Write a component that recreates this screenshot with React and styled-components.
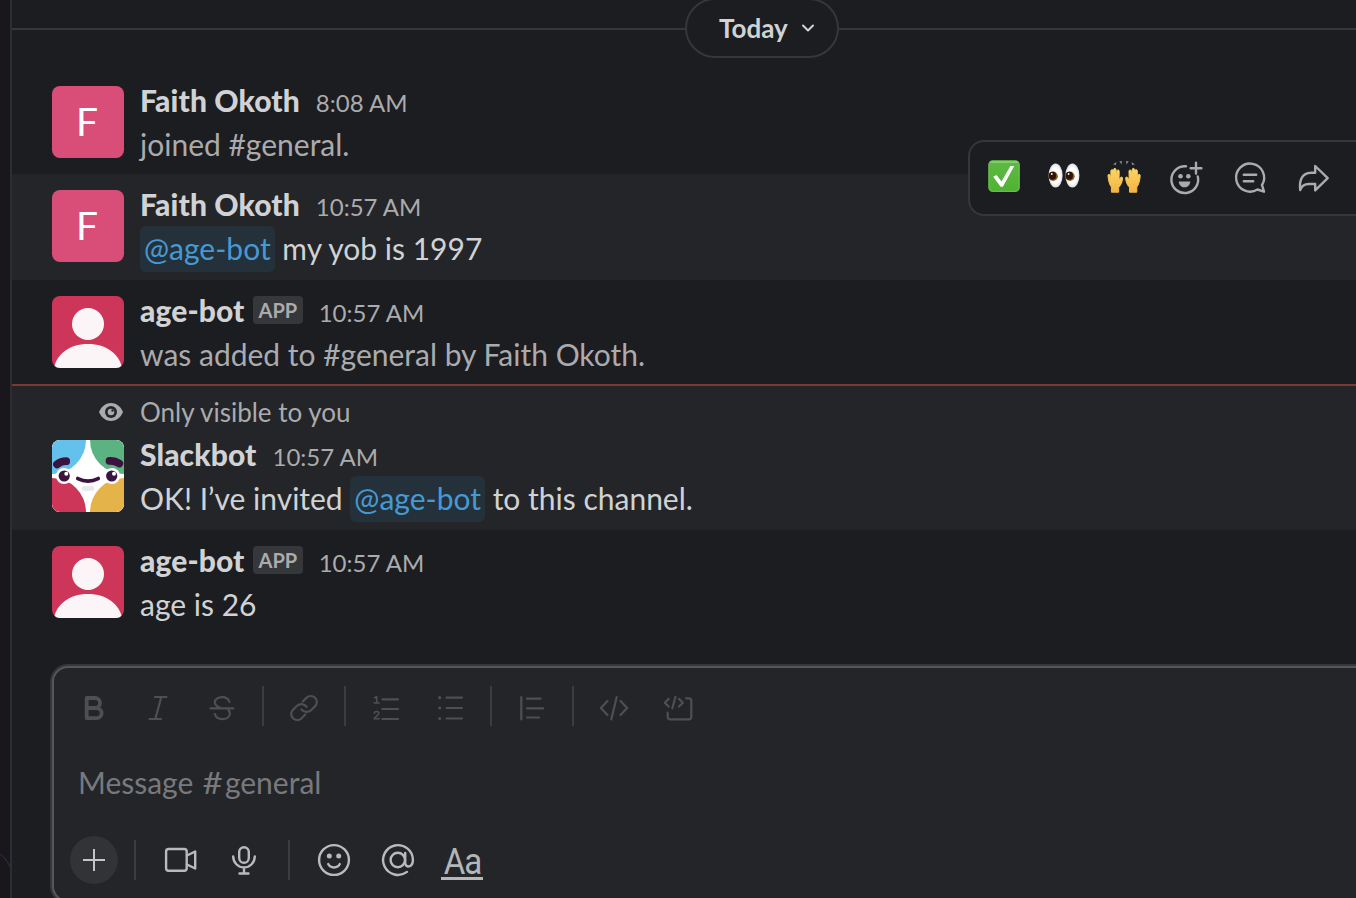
import React from 'react';
import styled, { createGlobalStyle } from 'styled-components';

const GlobalStyle = createGlobalStyle`
  *, *::before, *::after { box-sizing: border-box; }
  html, body { margin: 0; padding: 0; background: #1b1d21; overflow: hidden; }
  body { font-family: Lato, "Liberation Sans", sans-serif; color: #d1d2d3; }
`;

const Shell = styled.div`
  display: flex;
  width: 100vw;
  height: 898px;
  overflow: hidden;
`;

const Rail = styled.aside`
  position: relative;
  flex: 0 0 12px;
  background: #19171c;
  border-right: 2px solid #2d2e33;
  overflow: hidden;
  &::after {
    content: '';
    position: absolute;
    right: -3px;
    top: 847px;
    width: 72px;
    height: 72px;
    border: 1px solid #35343a;
    border-radius: 32px;
  }
`;

const Channel = styled.main`
  position: relative;
  flex: 1;
  min-width: 0;
  display: flex;
  flex-direction: column;
  background: #1b1d21;
`;

const DateDivider = styled.div`
  display: flex;
  align-items: center;
  height: 60px;
  margin-top: -1px;
  flex: none;
  width: 1500px;
  &::before, &::after {
    content: '';
    height: 2px;
    background: #35373b;
  }
  &::before { width: 673px; }
  &::after { flex: 1; }
`;

const DatePill = styled.button`
  display: flex;
  align-items: center;
  gap: 11px;
  width: 154px;
  height: 60px;
  margin: 0 0 2px;
  padding: 0 0 0 32px;
  border: 2px solid #35373b;
  border-radius: 30px;
  background: #1b1d21;
  color: #d1d2d3;
  font: 700 26px/36px Lato, sans-serif;
`;

const MessageList = styled.section`
  display: flex;
  flex-direction: column;
  padding-top: 11px;
`;

const Message = styled.article`
  display: flex;
  flex-direction: column;
  height: ${p => p.$height}px;
  padding: 8px 40px 0;
  background: ${p => (p.$lit ? '#232529' : 'transparent')};
`;

const UnreadLine = styled.div`
  height: 2px;
  background: #7b3a2e;
`;

const Notice = styled.div`
  display: flex;
  align-items: center;
  gap: 16px;
  height: 36px;
  margin: 0 0 2px 46px;
  color: #ababad;
  font-size: 26px;
  line-height: 36px;
`;

const MessageRow = styled.div`
  display: flex;
  gap: 16px;
`;

const Avatar = styled.div`
  flex: none;
  width: 72px;
  height: 72px;
  margin-top: 8px;
  border-radius: 8px;
  overflow: hidden;
  background: ${p => p.$color};
`;

const Initial = styled.span`
  display: block;
  width: 70px;
  color: #fff;
  font-size: 39px;
  line-height: 70px;
  text-align: center;
`;

const Body = styled.div`
  display: flex;
  flex-direction: column;
`;

const Header = styled.div`
  display: flex;
  align-items: baseline;
  height: 44px;
  line-height: 44px;
`;

const Name = styled.span`
  font-size: 30px;
  font-weight: 900;
  letter-spacing: 0.1px;
`;

const AppTag = styled.span`
  align-self: flex-start;
  height: 28px;
  margin: 8px 0 0 8px;
  padding: 0 6px;
  border-radius: 4px;
  background: #35373b;
  color: #ababad;
  font-size: 20px;
  font-weight: 700;
  line-height: 29px;
`;

const Time = styled.time`
  margin-left: ${p => (p.$afterTag ? 15.500 : 16)}px;
  color: #ababad;
  font-size: 24px;
`;

const Text = styled.p`
  margin: 0;
  height: 44px;
  color: ${p => (p.$muted ? '#ababad' : '#d1d2d3')};
  font-size: 30px;
  line-height: 44px;
  white-space: pre;
`;

const Mention = styled.span`
  padding: 4px 4px 6px;
  border-radius: 6px;
  background: #24313a;
  color: #4799d3;
`;

const Actions = styled.div`
  position: absolute;
  left: 956px;
  top: 140px;
  display: flex;
  align-items: center;
  width: 440px;
  height: 76px;
  padding: 0 4px;
  border: 2px solid #35373b;
  border-radius: 16px;
  background: #1b1d21;
`;

const IconCell = styled.span`
  flex: none;
  display: flex;
  align-items: center;
  justify-content: center;
  width: ${p => p.$width || 64}px;
  height: 40px;
  color: ${p => p.$color || '#ababad'};
`;

const FormatCell = styled(IconCell)`
  height: 44px;
  margin-top: 4px;
`;

const Composer = styled.section`
  flex: none;
  display: flex;
  flex-direction: column;
  width: 1400px;
  height: 236px;
  margin: 30px 0 0 40px;
  padding: 18px 8px 0;
  border: 2px solid #565856;
  border-radius: 16px;
  box-shadow: 0 0 0 2px #35373a;
  background: #232529;
`;

const ToolRow = styled.div`
  display: flex;
  align-items: center;
  height: 48px;
`;

const FormatRow = styled(ToolRow)`
  height: 40px;
`;

const Separator = styled.span`
  width: 2px;
  height: 40px;
  margin: 0 ${p => p.$after ?? 8}px 0 ${p => p.$before ?? 8}px;
  background: #3b3d41;
`;

const Placeholder = styled.div`
  height: 44px;
  margin: 34px 0 32px 16px;
  color: #78797c;
  font-size: 30px;
  line-height: 44px;
`;

const Hash = styled.span`
  display: inline-block;
  margin: 0 3.500px 0 3px;
  transform: scaleX(1.16);
`;

const AddButton = styled.button`
  display: flex;
  align-items: center;
  justify-content: center;
  width: 48px;
  height: 48px;
  margin-left: 8px;
  margin-right: 16px;
  padding: 0;
  border: 0;
  border-radius: 50%;
  background: #313337;
  color: #c4c5c6;
`;

const FontToggle = styled.span`
  display: flex;
  justify-content: center;
  width: 42px;
  height: 37px;
  margin-top: 2px;
  border-bottom: 3px solid #b6b7b9;
  color: #b4b5b6;
  font: 400 36px/38px Roboto, sans-serif;
  letter-spacing: -1px;
`;

const Squeeze = styled.span`
  display: inline-block;
  transform: translateX(1px) scaleX(0.92);
`;

const Icon = ({ children, w = 2.2, size = 40 }) => (
  <svg width={size} height={size} viewBox={`0 0 ${size} ${size}`} fill="none" stroke="currentColor"
    strokeWidth={w} strokeLinecap="round" strokeLinejoin="round" aria-hidden="true">
    {children}
  </svg>
);

const FORMAT = '#4d4f53';

const formatIcons = {
  bold: <Icon w={3.8}><path d="M12.700 10h8.300a5 5 0 0 1 0 10H12.700zM12.700 20h9.800a5 5 0 0 1 0 10.200H12.700z" /></Icon>,
  italic: <Icon><path d="M17 9h11.5M11.5 31H23M23.3 9l-6 22" /></Icon>,
  strike: <Icon><path d="M8.5 20.3h23M27.5 14C26.5 10.8 23.6 9.2 20 9.2c-4 0-7.2 2.1-7.2 5.1 0 2.6 2 4.1 4.7 5M12.8 26c1 3.4 3.8 5.1 7.6 5.1 4.4 0 7.4-2.2 7.4-5.4 0-1.400-.5-2.600-1.300-3.600" /></Icon>,
  link: (
    <Icon w={1.7}>
      <g transform="translate(4.300 4.300) scale(1.310)">
        <path d="M10 13a5 5 0 0 0 7.540.540l3-3a4.600 4.600 0 0 0-6.500-6.500l-3 3" />
        <path d="M14 11a5 5 0 0 0-7.540-.540l-3 3a4.600 4.600 0 0 0 6.500 6.500l3-3" />
      </g>
    </Icon>
  ),
  ordered: <Icon><path d="M16.500 11.300h15.500M16.500 21h15.500M16.500 31h15.500" /><path strokeWidth="1.600" d="M8.500 9.800l2.200-1.100v6.200M8 15h5.200M8.200 25.300c.4-2.500 4.600-2.300 4.600 0 0 1.800-2.800 3-4.600 5.500h5" /></Icon>,
  bullets: <Icon><path d="M16.500 9.700h15.500M16.500 20h15.500M16.500 30.500h15.500" /><g fill="currentColor" stroke="none"><circle cx="9.700" cy="9.700" r="1.600" /><circle cx="9.700" cy="20" r="1.600" /><circle cx="9.700" cy="30.500" r="1.600" /></g></Icon>,
  quote: <Icon><path d="M9.300 9v22.500M15 10.700h13.500M15 20.300h16.200M15 29.500h12" /></Icon>,
  code: <Icon><path d="M13.500 13L6.800 20l6.700 7M22.700 9l-5.400 22.500M26.500 13l6.700 7-6.700 7" /></Icon>,
  block: <Icon><path d="M10.700 10.900L6.800 14.700l3.900 3.800M17.500 8.800l-3.200 11.500M21 10.900l3.900 3.800-3.900 3.800M28 10.300h2.800a2.500 2.500 0 0 1 2.500 2.500v16a2.500 2.500 0 0 1-2.500 2.500H12.200a2.500 2.500 0 0 1-2.500-2.500V24.500" /></Icon>,
};

const CheckEmoji = () => (
  <svg width="40" height="40" viewBox="0 0 40 40">
    <defs>
      <linearGradient id="green" x1="0" y1="0" x2="0" y2="1"><stop offset="0" stopColor="#5fb944" /><stop offset="1" stopColor="#4fb331" /></linearGradient>
    </defs>
    <rect x="4.300" y="2.300" width="31.500" height="31.700" rx="4.500" fill="url(#green)" />
    <path d="M7 4h26" stroke="#8ed47b" strokeWidth="1.600" strokeLinecap="round" />
    <rect x="5" y="3" width="30.100" height="30.300" rx="4" fill="none" stroke="#7acb62" strokeOpacity=".5" strokeWidth="1.200" />
    <path d="M9.200 18.800l3.300-1.900 5 6.600 8.900-15.500h3.800L18.900 28.700h-2.300z" fill="#fff" />
  </svg>
);

const EyesEmoji = () => (
  <svg width="40" height="40" viewBox="0 0 40 40">
    <defs>
      <radialGradient id="sclera"><stop offset=".65" stopColor="#fff" /><stop offset="1" stopColor="#dcdde1" /></radialGradient>
    </defs>
    {[0, 16.800].map(x => (
      <g key={x} transform={`translate(${x} 0)`}>
        <ellipse cx="11.600" cy="17.500" rx="7" ry="12" fill="url(#sclera)" />
        <ellipse cx="9.200" cy="18.300" rx="4.700" ry="4.700" fill="#9a601f" />
        <ellipse cx="8.500" cy="17.800" rx="3.700" ry="4" fill="#2d1408" />
        <circle cx="7.800" cy="16" r=".9" fill="#fff" />
      </g>
    ))}
  </svg>
);

const Hand = () => (
  <path d="M7.400 34.200V29C5.600 27 4.300 22.500 4 17.600c0-1.600 1.800-1.600 2.100-.2l.8 4.200V13c0-1.700 2.300-1.700 2.400 0l.3 7V11.600c.1-1.600 2.400-1.600 2.400.1l.4 8.300.6-7c.2-1.500 2.200-1.300 2.200.2l-.2 8.800 1-1.800c1-1.800 2.900-1.300 2.600.4-.5 3.600-1.600 6.600-3.900 8.700v4.900z" />
);

const HandsEmoji = () => (
  <svg width="40" height="40" viewBox="0 0 40 40">
    <defs>
      <linearGradient id="skin" x1="0" y1="0" x2="0" y2="1"><stop offset="0" stopColor="#ffd663" /><stop offset="1" stopColor="#f0b445" /></linearGradient>
    </defs>
    <g fill="url(#skin)" stroke="url(#skin)" strokeWidth="1">
      <Hand />
      <g transform="translate(40.200 0) scale(-1 1)"><Hand /></g>
    </g>
    <path d="M9 6.500l3 .5.300-3zM15.300 3.200l2.700-.2-.5 3.600zM22 3l2.700.2-2.200 3.400zM27.700 4l.3 3 3-.500z" fill="#85888c" />
  </svg>
);

const actionIcons = [
  <Icon w={2.400}><path d="M20 8.300a13.400 13.400 0 1 0 11.800 10.200M30 4.800v10.800M24.600 10.200h10.800" /><g fill="currentColor" stroke="none"><circle cx="14.500" cy="18.300" r="2.300" /><circle cx="22.300" cy="18.300" r="2.300" /><path d="M12.700 23.500h11.600c-.4 3.700-2.700 5.800-5.800 5.800s-5.400-2.100-5.800-5.800z" /></g></Icon>,
  <Icon w={2.400}><path d="M32 27A14 14 0 1 0 27.500 31.500L34 33.700zM13.800 16.700h12.400M13.800 23.200h9.400" /></Icon>,
  <Icon w={2.400}><path d="M21.200 8L33.700 20.200 21.200 32.400V26H15c-4.500 0-7.500 2.200-8.800 6C5 22.500 8 15 17 14.800h4.200z" /></Icon>,
];

const PersonArt = () => (
  <svg width="72" height="72" viewBox="0 0 72 72" fill="#fcf5f7">
    <circle cx="36" cy="28" r="16" />
    <path d="M2 72C4.500 58.500 17 48 36 48s31.500 10.500 34 24z" />
  </svg>
);

const SlackbotArt = () => (
  <svg width="72" height="72" viewBox="0 0 72 72">
    <rect width="72" height="72" fill="#fff" />
    <circle cx="0" cy="0" r="34" fill="#63c1ec" />
    <circle cx="72" cy="0" r="34" fill="#5bb381" />
    <circle cx="0" cy="72" r="34" fill="#cd3559" />
    <circle cx="72" cy="72" r="34" fill="#e4b44a" />
    <circle cx="12" cy="36" r="8" fill="#fff" />
    <circle cx="60" cy="36" r="8" fill="#fff" />
    <circle cx="12.200" cy="36" r="5.600" fill="#3a143e" />
    <circle cx="59.700" cy="36" r="5.600" fill="#3a143e" />
    <circle cx="14.300" cy="33.700" r="2" fill="#fff" />
    <circle cx="62" cy="33.700" r="2" fill="#fff" />
    <g fill="none" stroke="#3a143e" strokeLinecap="round">
      <path d="M5 24.400Q9 21.200 14.200 21.200" strokeWidth="7.800" />
      <path d="M57.500 20.800Q63 20.600 67.300 23.500" strokeWidth="7.800" />
      <path d="M25.800 38.600Q36 43.500 46.200 38.600" strokeWidth="3.800" />
    </g>
    <path d="M32 48.500h8" stroke="#e9e9ea" strokeWidth="4.800" strokeLinecap="round" />
  </svg>
);

const Post = ({ height, lit, notice, avatar, color, name, app, time, muted, children }) => (
  <Message $height={height} $lit={lit}>
    {notice && (
      <Notice>
        <svg width="26" height="20" viewBox="0 0 26 20">
          <path d="M1 10C6-2 20-2 25 10 20 22 6 22 1 10z" fill="#ababad" />
          <circle cx="13" cy="10" r="6" fill="#232529" />
          <circle cx="13" cy="10" r="3.300" fill="#ababad" />
          <circle cx="14.500" cy="8.500" r="1.200" fill="#232529" />
        </svg>
        {notice}
      </Notice>
    )}
    <MessageRow>
      <Avatar $color={color}>{avatar}</Avatar>
      <Body>
        <Header>
          <Name>{name}</Name>
          {app && <AppTag>APP</AppTag>}
          <Time $afterTag={app}>{time}</Time>
        </Header>
        <Text $muted={muted}>{children}</Text>
      </Body>
    </MessageRow>
  </Message>
);

const Format = ({ name }) => <FormatCell $color={FORMAT}>{formatIcons[name]}</FormatCell>;

export default function App() {
  return (
    <Shell>
      <GlobalStyle />
      <Rail />
      <Channel>
        <DateDivider>
          <DatePill>
            Today
            <svg width="18" height="14" viewBox="0 0 18 14" fill="none" stroke="currentColor" strokeWidth="2" strokeLinecap="round" strokeLinejoin="round">
              <path d="M4 4.500l5 5 5-5" />
            </svg>
          </DatePill>
        </DateDivider>
        <MessageList>
          <Post height={104} avatar={<Initial>F</Initial>} color="#d94d79" name="Faith Okoth" time="8:08 AM" muted>joined #general.</Post>
          <Post height={106} lit avatar={<Initial>F</Initial>} color="#d94d79" name="Faith Okoth" time="10:57 AM">
            <Mention>@age-bot</Mention> my yob is 1997
          </Post>
          <Post height={104} avatar={<PersonArt />} color="#cd3559" name="age-bot" app time="10:57 AM" muted>was added to #general by Faith Okoth.</Post>
          <UnreadLine />
          <Post height={144} lit notice="Only visible to you" avatar={<SlackbotArt />} color="#fff" name="Slackbot" time="10:57 AM">
            OK! I’ve invited <Mention>@age-bot</Mention> to this channel.
          </Post>
          <Post height={106} avatar={<PersonArt />} color="#cd3559" name="age-bot" app time="10:57 AM">age is 26</Post>
        </MessageList>
        <Composer>
          <FormatRow>
            <Format name="bold" />
            <Format name="italic" />
            <Format name="strike" />
            <Separator />
            <Format name="link" />
            <Separator />
            <Format name="ordered" />
            <Format name="bullets" />
            <Separator />
            <Format name="quote" />
            <Separator />
            <Format name="code" />
            <Format name="block" />
          </FormatRow>
          <Placeholder>Message <Hash>#</Hash>general</Placeholder>
          <ToolRow>
            <AddButton><Icon w={2}><path d="M20 10v20M10 20h20" strokeLinecap="square" /></Icon></AddButton>
            <Separator $before={0} $after={12} />
            <IconCell $color="#b9babb"><Icon w={2.400}><rect x="6.100" y="9" width="20.600" height="21.800" rx="2.500" /><path d="M27 15.500l8.200-4v17l-8.200-4" /></Icon></IconCell>
            <IconCell $color="#b9babb"><Icon w={2.400}><rect x="15.200" y="7.300" width="9.600" height="15.400" rx="4.800" /><path d="M9.200 16.500a10.800 11 0 0 0 21.600 0M20 28v5.500M15.500 33.500h9" /></Icon></IconCell>
            <Separator $before={12} $after={12} />
            <IconCell $color="#b9babb"><Icon w={2.400}><circle cx="20" cy="20" r="14.900" /><path d="M14.200 24c2.200 4.600 9.400 4.600 11.600 0" /><g fill="currentColor" stroke="none"><circle cx="15.300" cy="16" r="2.500" /><circle cx="24.700" cy="16" r="2.500" /></g></Icon></IconCell>
            <IconCell $color="#b9babb"><Icon w={2.400}><circle cx="19.800" cy="20" r="7.200" /><path d="M27.200 13v10c0 5 7.700 5 7.700-3A14.900 14.900 0 1 0 29 31.900" /></Icon></IconCell>
            <IconCell><FontToggle><Squeeze>Aa</Squeeze></FontToggle></IconCell>
          </ToolRow>
        </Composer>
        <Actions>
          <IconCell $width={60}><CheckEmoji /></IconCell>
          <IconCell $width={60}><EyesEmoji /></IconCell>
          <IconCell $width={60}><HandsEmoji /></IconCell>
          {actionIcons.map((icon, i) => <IconCell key={i}>{icon}</IconCell>)}
        </Actions>
      </Channel>
    </Shell>
  );
}
